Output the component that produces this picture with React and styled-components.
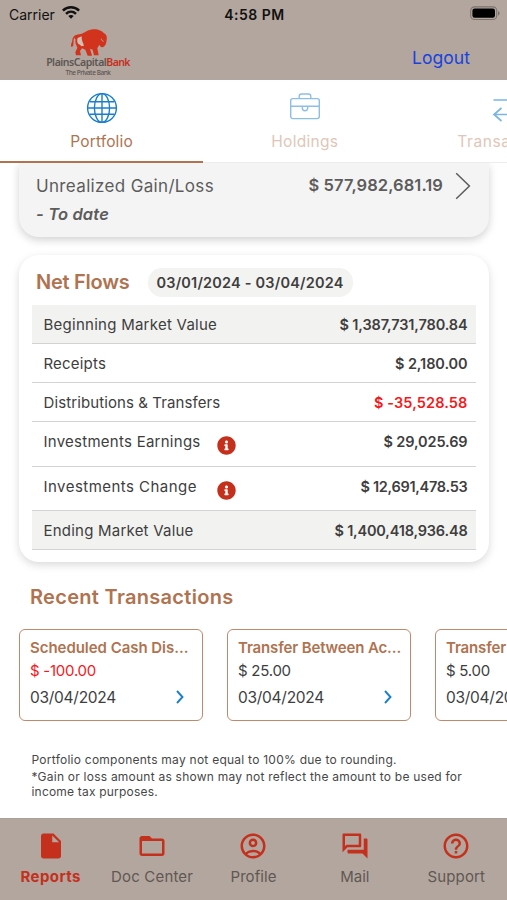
import React from "react";
import styled, { createGlobalStyle } from "styled-components";
import {
  MdInsertDriveFile,
  MdFolderOpen,
  MdOutlineAccountCircle,
  MdOutlineQuestionAnswer,
  MdHelpOutline,
} from "react-icons/md";
import { FaInfoCircle } from "react-icons/fa";

const color = {
  bar: "#b3a69e",
  copper: "#b07350",
  red: "#c4301c",
  negative: "#f5191c",
  ink: "#3e3e3e",
  muted: "#5c5c5c",
  blue: "#1a7fca",
};

const Global = createGlobalStyle`
  * { box-sizing: border-box; }
  body { margin: 0; background: #fff; color: ${color.ink}; font-family: Inter, sans-serif; }
  svg { display: block; flex: none; }
`;

const Screen = styled.div`
  display: flex;
  flex-direction: column;
  width: 507px;
  height: 900px;
  overflow: hidden;
`;

const Text = styled.span`
  white-space: nowrap;
  font-size: ${(p) => p.$size}px;
  font-weight: ${(p) => p.$weight || 400};
  letter-spacing: ${(p) => p.$track || 0}px;
  color: ${(p) => p.$color || "inherit"};
`;

/* ---- header ---- */

const Header = styled.header`
  flex: none;
  height: 79.5px;
  background: ${color.bar};
`;

const StatusBar = styled.div`
  display: grid;
  grid-template-columns: 1fr auto 1fr;
  align-items: center;
  height: 28px;
  padding: 0 7px 0 9px;
  color: #111;
`;

const Carrier = styled.div`
  display: flex;
  align-items: center;
  gap: 7px;
`;

const BatteryIcon = styled.svg`
  justify-self: end;
  margin-bottom: 2px;
`;

const Brand = styled.div`
  display: flex;
  justify-content: space-between;
  padding: 0 37px 0 46px;
`;

const Logo = styled.div`
  display: flex;
  flex-direction: column;
  align-items: center;
  width: 84px;
  font-family: "Noto Sans", sans-serif;
`;

const LogoName = styled.div`
  display: flex;
  height: 12px;
  line-height: 12px;
`;

const LogoTag = styled.div`
  display: flex;
  height: 9px;
  line-height: 9px;
`;

const Logout = styled.a`
  line-height: 60px;
  height: 51px;
`;

/* ---- tabs ---- */

const Tabs = styled.nav`
  display: flex;
  flex: none;
  height: 83.5px;
  background: #fff;
  border-bottom: 1px solid #ececec;
`;

const Tab = styled.div`
  display: flex;
  flex: none;
  flex-direction: column;
  align-items: center;
  width: 203.2px;
  height: 83px;
  padding-top: 12.5px;
  border-bottom: 2.5px solid ${(p) => (p.$active ? color.copper : "transparent")};
  color: ${(p) => (p.$active ? color.copper : "#dfc6b8")};
  line-height: 20px;

  svg { margin-bottom: 8px; }
`;

/* ---- cards ---- */

const Content = styled.main`
  flex: 1;
  min-height: 0;
  overflow: hidden;
`;

const GainCard = styled.section`
  display: flex;
  justify-content: space-between;
  height: 74px;
  margin: 0 18px 0 19px;
  padding: 9px 18px 0 17px;
  border-radius: 0 0 20px 20px;
  background: #f4f4f4;
  color: ${color.muted};
  box-shadow: 0 3px 9px rgba(0, 0, 0, 0.18);
`;

const GainLabel = styled.div`
  display: flex;
  flex-direction: column;
  line-height: 28px;
`;

const GainNote = styled.em`
  line-height: 28px;
`;

const GainValue = styled.div`
  display: flex;
  align-items: center;
  gap: 12px;
  height: 27px;
  line-height: 22px;

  span { padding-bottom: 2px; }
`;

const FlowsCard = styled.section`
  height: 307px;
  margin: 18px 18px 0 19px;
  padding: 13px 13px 0;
  border-radius: 20px;
  background: #fff;
  box-shadow: 0 3px 9px rgba(0, 0, 0, 0.15);
`;

const FlowsHeader = styled.div`
  display: flex;
  align-items: center;
  gap: 18px;
  height: 28px;
  padding-left: 4px;
`;

const DatePill = styled.div`
  width: 205px;
  border-radius: 14px;
  background: #f3f3f1;
  line-height: 28px;
  text-align: center;
`;

const FlowTable = styled.div`
  margin-top: 9px;
`;

const FlowRow = styled.div`
  display: flex;
  justify-content: space-between;
  height: ${(p) => (p.$tall ? 44.5 : 39)}px;
  padding: 0 8.5px 0 11.5px;
  border-bottom: 1px solid #d3d3d3;
  background: ${(p) => (p.$shaded ? "#f2f2f0" : "#fff")};
  line-height: 39px;
`;

const FlowName = styled.div`
  display: flex;
  justify-content: space-between;
  width: 192px;

  svg { margin-top: 14px; }
`;

/* ---- transactions ---- */

const SectionTitle = styled.h2`
  margin: 20px 0 0 30px;
  font-size: 20px;
  line-height: 31px;
`;

const Carousel = styled.div`
  display: flex;
  gap: 24.5px;
  margin-top: 16px;
  padding-left: 19px;
`;

const TransactionCard = styled.article`
  display: flex;
  flex: none;
  flex-direction: column;
  width: 183.5px;
  height: 92px;
  padding: 5.5px 10px 0;
  border: 1.5px solid #bd8a6d;
  border-radius: 6px;
  line-height: 23px;
`;

const TransactionFoot = styled.div`
  display: flex;
  align-items: center;
  justify-content: space-between;
  margin-top: 4px;
  padding-right: 7.5px;
`;

const Notes = styled.footer`
  margin: 31.5px 0 0 31.5px;
  color: #474747;
  line-height: 14.8px;
`;

const Note = styled.p`
  display: flex;
  flex-direction: column;
  margin: 0 0 3.2px;
`;

/* ---- bottom navigation ---- */

const BottomNav = styled.nav`
  display: grid;
  grid-template-columns: repeat(5, 1fr);
  flex: none;
  height: 82.5px;
  padding-top: 12px;
  border-top: 1px solid #aaa09a;
  background: ${color.bar};
`;

const NavItem = styled.div`
  display: flex;
  flex-direction: column;
  align-items: center;
  gap: 6px;
  color: ${(p) => (p.$active ? color.red : "#5f5853")};
  line-height: 20px;

  svg { color: ${color.red}; }
`;

const WifiIcon = () => (
  <svg width="18" height="16" viewBox="0 .5 18 16" fill="none" stroke="#111" strokeWidth="2.5">
    <path d="M0.9 5.1C5.4.7 12.6.7 17.1 5.1" />
    <path d="M4 8.3c2.9-2.7 7.1-2.7 10 0" />
    <path d="M6.3 10.6c1.5-1.5 3.9-1.5 5.4 0L9 13.3z" fill="#111" stroke="none" />
  </svg>
);

const Battery = () => (
  <BatteryIcon width="30" height="15" viewBox="0 0 30 15">
    <rect x=".7" y=".9" width="26" height="12.6" rx="3.8" fill="none" stroke="#7c736e" strokeWidth="1.1" />
    <rect x="2.4" y="2.6" width="22.6" height="9.2" rx="2.2" fill="#000" />
    <path d="M28 4.9c2.2.8 2.2 3.8 0 4.6z" fill="#7c736e" />
  </BatteryIcon>
);

const Bison = () => (
  <svg width="37" height="28" viewBox="90 23 111 84">
    <path
      fill="#d2331c"
      d="M94 80C91 72 96 68 97 60C98 48 106 43 118 42C130 41 140 29 158 27C172 25 186 31 191 38C198 40 202 48 200 58C199 68 197 76 190 80C184 82 180 78 178 73L172 84L176 105H162L158 88L150 85L156 106H143L136 88L126 84L120 92L123 105H108L106 96L112 82C110 74 104 70 107 58L103 52C99 58 102 72 99 78Z"
    />
    <path d="M113 53l12-5c-1 11 4 19 7 28l-8 2c-2-5-6-6-10-8-3-5-3-11-1-17z" fill="#d3bfb4" />
    <path d="M184 55c0 5 3 7 7 8" fill="none" stroke="#b3a69e" strokeWidth="3" />
  </svg>
);

const Globe = () => (
  <svg width="32" height="32" viewBox="0 0 32 32" fill="none" stroke={color.blue} strokeWidth="1.4">
    <circle cx="16" cy="16" r="14.4" />
    <ellipse cx="16" cy="16" rx="7.6" ry="14.4" />
    <path d="M16 1.6v28.8M1.6 16h28.8M4 9.7h24M4 22.3h24" />
  </svg>
);

const Briefcase = () => (
  <svg width="32" height="32" viewBox="0 0 32 32" fill="none" stroke="#8dbfe3" strokeWidth="1.4">
    <rect x="1.7" y="6.6" width="28.6" height="20" rx="2" />
    <path d="M10.2 6.4V4.2c0-1.3.9-2.2 2.2-2.2h7.2c1.3 0 2.2.9 2.2 2.2v2.2M1.7 14.2h11.6M18.7 14.2h11.6M13.3 14.2h5.4v1.8a2.7 2.7 0 0 1-5.4 0z" />
  </svg>
);

const Arrows = () => (
  <svg width="32" height="32" viewBox="0 0 32 32" fill="none" stroke="#7cb6e0" strokeWidth="1.7">
    <path d="M1.5 8h27M22.5 2l6 6-6 6M30 22.5H2.5M9.5 16L2 22.5 9.5 29" />
  </svg>
);

const LargeChevron = () => (
  <svg width="16" height="28" viewBox="0 0 16 28" fill="none" stroke="#5c5c5c" strokeWidth="1.5">
    <path d="M1.2 1.2L14.4 14 1.2 26.8" />
  </svg>
);

const SmallChevron = () => (
  <svg width="8" height="14" viewBox="0 0 8 14" fill="none" stroke={color.blue} strokeWidth="1.9">
    <path d="M1 1l5.5 6L1 13" />
  </svg>
);

const flows = [
  { name: "Beginning Market Value", track: 0.26, value: "$ 1,387,731,780.84", vTrack: -0.13, shaded: true },
  { name: "Receipts", track: 0.19, value: "$ 2,180.00", vTrack: -0.09 },
  { name: "Distributions & Transfers", track: 0.1, value: "$ -35,528.58", vTrack: 0.11, negative: true },
  { name: "Investments Earnings", track: 0.26, value: "$ 29,025.69", vTrack: -0.12, info: true },
  { name: "Investments Change", track: 0.46, value: "$ 12,691,478.53", vTrack: -0.29, info: true },
  { name: "Ending Market Value", track: 0.22, value: "$ 1,400,418,936.48", vTrack: -0.19, shaded: true },
];

const transactions = [
  { title: "Scheduled Cash Dis...", track: -0.04, amount: "$ -100.00", negative: true },
  { title: "Transfer Between Ac...", track: -0.14, amount: "$ 25.00" },
  { title: "Transfer Between Ac...", track: -0.14, amount: "$ 5.00" },
];

const navItems = [
  { label: "Reports", Icon: MdInsertDriveFile, track: 0.44, active: true },
  { label: "Doc Center", Icon: MdFolderOpen, track: 0.17 },
  { label: "Profile", Icon: MdOutlineAccountCircle, track: 0.06 },
  { label: "Mail", Icon: MdOutlineQuestionAnswer, track: 0 },
  { label: "Support", Icon: MdHelpOutline, track: 0.12 },
];

export default function App() {
  return (
    <Screen>
      <Global />
      <Header>
        <StatusBar>
          <Carrier>
            <Text $size={14}>Carrier</Text>
            <WifiIcon />
          </Carrier>
          <Text $size={14} $weight={600} $track={0.5}>4:58 PM</Text>
          <Battery />
        </StatusBar>
        <Brand>
          <Logo>
            <Bison />
            <LogoName>
              <Text $size={10.5} $weight={600} $track={-0.46} $color="#5c5654">PlainsCapital</Text>
              <Text $size={10.5} $weight={600} $track={-0.6} $color={color.red}>Bank</Text>
            </LogoName>
            <LogoTag>
              <Text $size={6.5} $weight={500} $track={-0.46} $color="#5c5654">The Private Bank</Text>
            </LogoTag>
          </Logo>
          <Logout>
            <Text $size={17.5} $track={0.05} $color="#1843e0">Logout</Text>
          </Logout>
        </Brand>
      </Header>

      <Tabs>
        <Tab $active>
          <Globe />
          <Text $size={15.5} $track={0.14}>Portfolio</Text>
        </Tab>
        <Tab>
          <Briefcase />
          <Text $size={15.5} $track={0.29}>Holdings</Text>
        </Tab>
        <Tab>
          <Arrows />
          <Text $size={15.5} $track={0.6}>Transactions</Text>
        </Tab>
      </Tabs>

      <Content>
        <GainCard>
          <GainLabel>
            <Text $size={17} $track={0.34}>Unrealized Gain/Loss</Text>
            <GainNote>
              <Text $size={16.5} $weight={600} $track={0.15}>- To date</Text>
            </GainNote>
          </GainLabel>
          <GainValue>
            <Text $size={16.5} $weight={600} $track={0.08}>$ 577,982,681.19</Text>
            <LargeChevron />
          </GainValue>
        </GainCard>

        <FlowsCard>
          <FlowsHeader>
            <Text $size={20} $weight={600} $track={-0.25} $color={color.copper}>Net Flows</Text>
            <DatePill>
              <Text $size={14.5} $weight={600} $track={0.19}>03/01/2024 - 03/04/2024</Text>
            </DatePill>
          </FlowsHeader>
          <FlowTable>
            {flows.map((f) => (
              <FlowRow key={f.name} $tall={f.info} $shaded={f.shaded}>
                <FlowName>
                  <Text $size={15} $track={f.track}>{f.name}</Text>
                  {f.info && <FaInfoCircle size={19} color={color.red} />}
                </FlowName>
                <Text $size={14.5} $weight={600} $track={f.vTrack} $color={f.negative && color.negative}>
                  {f.value}
                </Text>
              </FlowRow>
            ))}
          </FlowTable>
        </FlowsCard>

        <SectionTitle>
          <Text $size={20} $weight={600} $track={0.3} $color={color.copper}>Recent Transactions</Text>
        </SectionTitle>
        <Carousel>
          {transactions.map((t) => (
            <TransactionCard key={t.amount}>
              <Text $size={15} $weight={600} $track={t.track} $color={color.copper}>{t.title}</Text>
              <Text $size={15} $track={-0.25} $color={t.negative && color.negative}>{t.amount}</Text>
              <TransactionFoot>
                <Text $size={15.5} $track={-0.28}>03/04/2024</Text>
                <SmallChevron />
              </TransactionFoot>
            </TransactionCard>
          ))}
        </Carousel>
        <Notes>
          <Note>
            <Text $size={12} $track={0.25}>Portfolio components may not equal to 100% due to rounding.</Text>
          </Note>
          <Note>
            <Text $size={12} $track={0.23}>*Gain or loss amount as shown may not reflect the amount to be used for</Text>
            <Text $size={12} $track={0.2}>income tax purposes.</Text>
          </Note>
        </Notes>
      </Content>

      <BottomNav>
        {navItems.map(({ label, Icon, track, active }) => (
          <NavItem key={label} $active={active}>
            <Icon size={30} />
            <Text $size={15} $weight={active ? 700 : 400} $track={track}>{label}</Text>
          </NavItem>
        ))}
      </BottomNav>
    </Screen>
  );
}
